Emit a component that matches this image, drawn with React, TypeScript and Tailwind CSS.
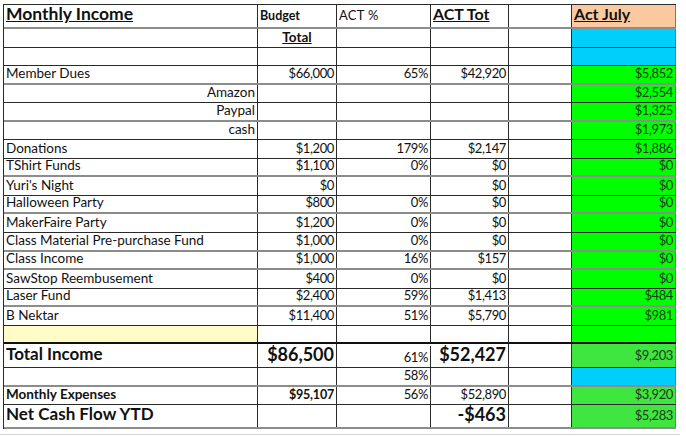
import React from "react";

type Cell = { t?: string; cls?: string; bg?: string };
type Row = { h: string; line: string; pb?: string; cells: Cell[] };

const widths = ["w-[254px]", "w-[79px]", "w-[94px]", "w-[78px]", "w-[63px]", "w-[104px]"];

const K = "border-b border-[#2a2a2a]";
const G = "border-b-2 border-[#8c8c8c]";
const THICK = "border-b-2 border-[#111]";

// numbers: right aligned, a bit tighter like Calibri digits
const R = "justify-end text-[13px] tracking-[-0.4px]";
const CTR = "justify-center";
const GREEN = "bg-[#00ff00]";
const LGREEN = "bg-[#3fe63f]";
const CYAN = "bg-[#00cffc]";
const PEACH = "bg-[#fbc9a0]";

const fv = (t: string, bg = GREEN): Cell => ({ t, cls: `${R} text-[#1c3a1c]`, bg });

const line = (label: string, budget: string, pct: string, tot: string, july: string, lineCls: string, h: string): Row => ({
  h,
  line: lineCls,
  cells: [
    { t: label },
    { t: budget, cls: R },
    { t: pct, cls: R },
    { t: tot, cls: R },
    {},
    fv(july),
  ],
});

const sub = (label: string, july: string, lineCls: string, h: string): Row => ({
  h,
  line: lineCls,
  cells: [{ t: label, cls: "justify-end" }, {}, {}, {}, {}, fv(july)],
});

const rows: Row[] = [
  {
    h: "h-[24px]",
    line: G,
    pb: "pb-[4px]",
    cells: [
      { t: "Monthly Income", cls: "text-[17.5px] font-bold underline leading-[18px]" },
      { t: "Budget", cls: "text-[12.5px] font-bold" },
      { t: "ACT %", cls: "text-[13px] tracking-[0.3px]" },
      { t: "ACT Tot", cls: "text-[16px] font-bold underline leading-[18px]" },
      {},
      { t: "Act July", cls: "text-[16px] font-bold underline leading-[18px]", bg: PEACH },
    ],
  },
  { h: "h-[19px]", line: K, cells: [{}, { t: "Total", cls: `${CTR} font-bold underline` }, {}, {}, {}, { bg: CYAN }] },
  { h: "h-[18px]", line: K, cells: [{}, {}, {}, {}, {}, { bg: CYAN }] },
  line("Member Dues", "$66,000", "65%", "$42,920", "$5,852", G, "h-[19px]"),
  sub("Amazon", "$2,554", K, "h-[18px]"),
  sub("Paypal", "$1,325", G, "h-[19px]"),
  sub("cash", "$1,973", K, "h-[18px]"),
  line("Donations", "$1,200", "179%", "$2,147", "$1,886", K, "h-[19px]"),
  line("TShirt Funds", "$1,100", "0%", "$0", "$0", G, "h-[18px]"),
  line("Yuri's Night", "$0", "", "$0", "$0", K, "h-[19px]"),
  line("Halloween Party", "$800", "0%", "$0", "$0", G, "h-[18px]"),
  line("MakerFaire Party", "$1,200", "0%", "$0", "$0", K, "h-[19px]"),
  line("Class Material Pre-purchase Fund", "$1,000", "0%", "$0", "$0", G, "h-[19px]"),
  line("Class Income", "$1,000", "16%", "$157", "$0", G, "h-[18px]"),
  line("SawStop Reembusement", "$400", "0%", "$0", "$0", K, "h-[19px]"),
  line("Laser Fund", "$2,400", "59%", "$1,413", "$484", G, "h-[18px]"),
  line("B Nektar", "$11,400", "51%", "$5,790", "$981", K, "h-[19px]"),
  { h: "h-[18px]", line: THICK, cells: [{ bg: "bg-[#fffcc8]" }, {}, {}, {}, {}, { bg: GREEN }] },
  {
    h: "h-[24px]",
    line: K,
    pb: "pb-[4px]",
    cells: [
      { t: "Total Income", cls: "text-[17px] font-bold leading-[18px]" },
      { t: "$86,500", cls: "justify-end text-[18px] font-bold leading-[18px]" },
      { t: "61%", cls: `${R} translate-y-[2px]` },
      { t: "$52,427", cls: "justify-end text-[18px] font-bold leading-[18px]" },
      {},
      fv("$9,203", LGREEN),
    ],
  },
  { h: "h-[19px]", line: G, cells: [{}, {}, { t: "58%", cls: R }, {}, {}, { bg: CYAN }] },
  {
    h: "h-[18px]",
    line: K,
    cells: [
      { t: "Monthly Expenses", cls: "text-[13.5px] font-bold" },
      { t: "$95,107", cls: "justify-end text-[12.5px] font-bold tracking-[-0.2px]" },
      { t: "56%", cls: R },
      { t: "$52,890", cls: R },
      {},
      fv("$3,920", LGREEN),
    ],
  },
  {
    h: "h-[24px]",
    line: G,
    pb: "pb-[4px]",
    cells: [
      { t: "Net Cash Flow YTD", cls: "text-[17px] font-bold leading-[18px]" },
      {},
      {},
      { t: "-$463", cls: "justify-end text-[18px] font-bold leading-[18px]" },
      {},
      fv("$5,283", LGREEN),
    ],
  },
];

export default function App() {
  return (
    <div className="w-[686px] h-[436px] bg-white overflow-hidden text-[13.5px] leading-[15px] text-[#111]" style={{ fontFamily: "Lato, 'Open Sans', sans-serif" }}>
      <div className="ml-[3px] mt-[4px] w-[673px] border-l border-t border-[#2a2a2a]">
        {rows.map((row, i) => (
          <div key={i} className={`flex ${row.h} ${row.line}`}>
            {row.cells.map((c, j) => (
              <div
                key={j}
                className={`${widths[j]} shrink-0 h-full flex items-end px-[2px] ${row.pb ?? "pb-[2px]"} whitespace-nowrap ${
                  j === 5 ? "border-r border-[#777]" : "border-r border-[#2a2a2a]"
                } ${c.bg ?? ""} ${c.cls ?? ""}`}
              >
                {c.t}
              </div>
            ))}
          </div>
        ))}
      </div>
      <div className="mt-[5px] w-[680px] border-t border-[#d4d4d4]" />
    </div>
  );
}
